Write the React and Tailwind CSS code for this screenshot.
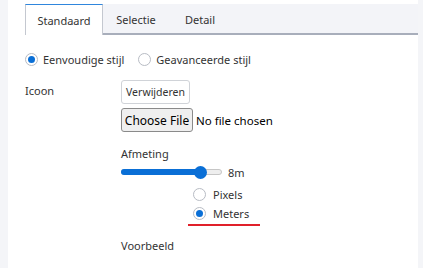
export default function App() {
    const font = { fontFamily: '"Segoe UI", "Noto Sans", sans-serif' }

    function Radio({ checked }) {
        return (
            <span className="w-[13px] h-[13px] rounded-full border border-[#b8bcc4] bg-white flex items-center justify-center shrink-0">
                {checked && <span className="w-[7px] h-[7px] rounded-full bg-[#0a6fd6]" />}
            </span>
        )
    }

    return (
        <div className="w-[423px] h-[268px] bg-[#f4f5f8] flex overflow-hidden text-[11px] leading-[15px] text-[#333]" style={font}>
            <div className="ml-2 w-[410px] h-full bg-white pt-1 pl-[17px]">
                {/* tabs */}
                <div className="flex h-[31px] bg-[#f3f4f8]">
                    <div className="w-[78px] h-[31px] pt-px bg-white border-t border-t-[#2f86dd] border-x border-x-[#c4c8d0] flex items-center justify-center">
                        Standaard
                    </div>
                    <div className="flex-1 flex items-start border-b-2 border-b-[#a8aebb] h-[31px]">
                        <div className="w-[66px] h-[30px] flex items-center justify-center">Selectie</div>
                        <div className="w-[62px] h-[30px] flex items-center justify-center">Detail</div>
                    </div>
                </div>

                {/* style choice */}
                <div className="flex items-center mt-[18px] h-[13px]">
                    <Radio checked />
                    <span className="ml-[5px]">Eenvoudige stijl</span>
                    <span className="ml-[14px]"><Radio /></span>
                    <span className="ml-[5px]">Geavanceerde stijl</span>
                </div>

                {/* icon */}
                <div className="flex mt-[14px]">
                    <div className="w-[96px] pt-[3px]">Icoon</div>
                    <div className="flex flex-col">
                        <button className="w-[69px] h-[24px] border border-[#d0d3d8] rounded-[3px] bg-white text-[10.5px] text-[#333]">
                            Verwijderen
                        </button>
                        <div className="flex items-center mt-[4px]">
                            <button className="w-[72px] h-[24px] border border-[#8a8a8a] rounded-[3px] bg-[#efefef] text-[12px] text-black">
                                Choose File
                            </button>
                            <span className="ml-[3px] text-[11.5px] text-black">No file chosen</span>
                        </div>

                        <div className="mt-[14px]">Afmeting</div>
                        <div className="flex items-center mt-[4px] h-[14px]">
                            <div className="relative w-[101px] h-[6px] rounded-full bg-[#eeeeee] border border-[#c6c6c6]">
                                <div className="absolute -left-px -top-px h-[6px] w-[80px] rounded-full bg-[#0a6fd6]" />
                                <div className="absolute left-[72px] -top-[4px] w-[13px] h-[13px] rounded-full bg-[#0a6fd6]" />
                            </div>
                            <span className="ml-[6px]">8m</span>
                        </div>

                        <div className="flex flex-col ml-[72px] mt-[9px] gap-[6px]">
                            <div className="flex items-center h-[13px]">
                                <Radio />
                                <span className="ml-[7px]">Pixels</span>
                            </div>
                            <div className="flex items-center h-[13px]">
                                <Radio checked />
                                <span className="ml-[7px]">Meters</span>
                            </div>
                        </div>
                        <div className="ml-[67px] mt-[4px] w-[72px] h-[2px] bg-[#e0202a]" />

                        <div className="mt-[12px]">Voorbeeld</div>
                    </div>
                </div>
            </div>
            <div className="flex-1" />
        </div>
    )
}
